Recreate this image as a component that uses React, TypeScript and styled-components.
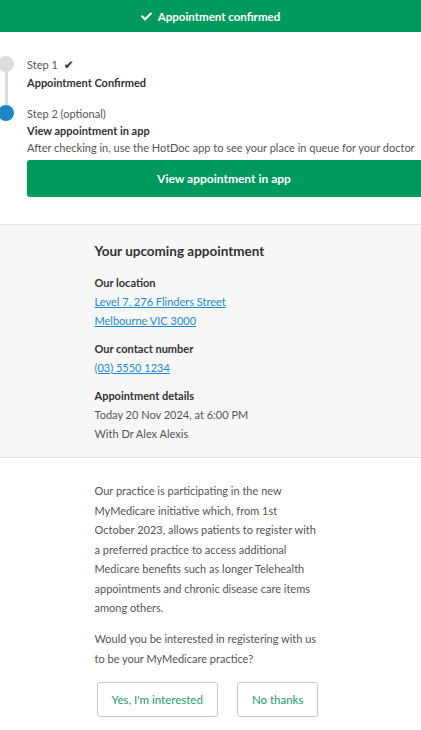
import React from 'react';
import styled, { createGlobalStyle } from 'styled-components';
import { FaCheck } from 'react-icons/fa';

const GlobalStyle = createGlobalStyle`
  html, body {
    margin: 0;
    padding: 0;
    background: #ffffff;
    font-family: Lato, "Open Sans", "Liberation Sans", sans-serif;
    color: #555;
    overflow-x: hidden;
  }
  * { box-sizing: border-box; }
`;

export default function App() {
  return (
    <Page>
      <GlobalStyle />
      <Banner>
        <FaCheck size={11} />
        <span>Appointment confirmed</span>
      </Banner>

      <Steps>
        <Step>
          <Marker>
            <Dot />
            <Connector />
          </Marker>
          <StepBody $last={false}>
            <StepLabel>
              Step 1 <Tick>✔</Tick>
            </StepLabel>
            <StepTitle>Appointment Confirmed</StepTitle>
          </StepBody>
        </Step>
        <Step>
          <Marker>
            <Dot $active />
          </Marker>
          <StepBody $last>
            <StepLabel>Step 2 (optional)</StepLabel>
            <StepTitle>View appointment in app</StepTitle>
            <StepText>After checking in, use the HotDoc app to see your place in queue for your doctor</StepText>
            <PrimaryButton>View appointment in app</PrimaryButton>
          </StepBody>
        </Step>
      </Steps>

      <Summary>
        <Column>
          <Heading>Your upcoming appointment</Heading>
          <Group>
            <Label>Our location</Label>
            <Link href="#">Level 7, 276 Flinders Street</Link>
            <Link href="#">Melbourne VIC 3000</Link>
          </Group>
          <Group>
            <Label>Our contact number</Label>
            <Link href="#">(03) 5550 1234</Link>
          </Group>
          <Group>
            <Label>Appointment details</Label>
            <Value>Today 20 Nov 2024, at 6:00 PM</Value>
            <Value>With Dr Alex Alexis</Value>
          </Group>
        </Column>
      </Summary>

      <Offer>
        <Column>
          <Para>
            Our practice is participating in the new MyMedicare initiative which, from 1st
            <br />
            October 2023, allows patients to register with a preferred practice to access additional
            Medicare benefits such as longer Telehealth appointments and chronic disease care items
            among others.
          </Para>
          <Para>Would you be interested in registering with us to be your MyMedicare practice?</Para>
          <Actions>
            <OutlineButton>Yes, I'm interested</OutlineButton>
            <OutlineButton>No thanks</OutlineButton>
          </Actions>
        </Column>
      </Offer>
    </Page>
  );
}

const Page = styled.div`
  width: 100%;
  min-height: 730px;
`;

const Banner = styled.div`
  height: 32px;
  background: #009a5c;
  color: #fff;
  display: flex;
  align-items: center;
  justify-content: center;
  gap: 6px;
  font-size: 11.5px;
  font-weight: 700;
`;

const Steps = styled.div`
  padding: 24px 0 27px 0;
`;

const Step = styled.div`
  display: grid;
  grid-template-columns: 12px 1fr;
  column-gap: 15px;
`;

const Marker = styled.div`
  display: flex;
  flex-direction: column;
  align-items: center;
`;

const Dot = styled.div<{ $active?: boolean }>`
  flex: none;
  width: 16px;
  height: 16px;
  border-radius: 50%;
  background: ${(p) => (p.$active ? '#1b87c9' : '#dcdcdc')};
`;

const Connector = styled.div`
  flex: 1;
  width: 3px;
  background: #dcdcdc;
`;

const StepBody = styled.div<{ $last: boolean }>`
  padding-bottom: ${(p) => (p.$last ? '0' : '14px')};
  font-size: 11px;
  line-height: 17px;
`;

const StepLabel = styled.div`
  color: #555;
`;

const Tick = styled.span`
  margin-left: 3px;
  font-family: "DejaVu Sans", sans-serif;
  font-size: 12px;
  color: #333;
`;

const StepTitle = styled.div`
  font-weight: 700;
  color: #333;
`;

const StepText = styled.div`
  color: #555;
  white-space: nowrap;
`;

const PrimaryButton = styled.button`
  display: block;
  width: 100%;
  height: 37px;
  margin-top: 4px;
  border: none;
  border-radius: 3px 0 0 3px;
  background: #009a5c;
  color: #fff;
  font-family: inherit;
  font-size: 12px;
  font-weight: 700;
`;

const Summary = styled.section`
  background: #f7f7f7;
  border-top: 1px solid #e4e4e4;
  border-bottom: 1px solid #e4e4e4;
  padding: 16px 0 14px;
`;

const Column = styled.div`
  width: 232px;
  margin: 0 auto;
`;

const Heading = styled.h2`
  margin: 0 0 12px;
  font-size: 13.5px;
  line-height: 20px;
  font-weight: 700;
  color: #333;
`;

const Group = styled.div`
  display: flex;
  flex-direction: column;
  align-items: flex-start;
  font-size: 11px;
  line-height: 19px;
  & + & {
    margin-top: 9px;
  }
`;

const Label = styled.div`
  font-weight: 700;
  color: #333;
`;

const Link = styled.a`
  color: #1b8bd1;
  text-decoration: underline;
`;

const Value = styled.div`
  color: #555;
`;

const Offer = styled.section`
  padding: 23px 0 24px;
`;

const Para = styled.p`
  width: 228px;
  margin: 0 0 11.5px;
  font-size: 11px;
  line-height: 19.5px;
  color: #555;
`;

const Actions = styled.div`
  display: flex;
  gap: 19px;
  margin-top: 14px;
  padding-left: 2px;
`;

const OutlineButton = styled.button`
  height: 35px;
  padding: 0 14px;
  background: #fff;
  border: 1px solid #c8c8c8;
  border-radius: 3px;
  color: #1aa067;
  font-family: inherit;
  font-size: 11.5px;
`;
